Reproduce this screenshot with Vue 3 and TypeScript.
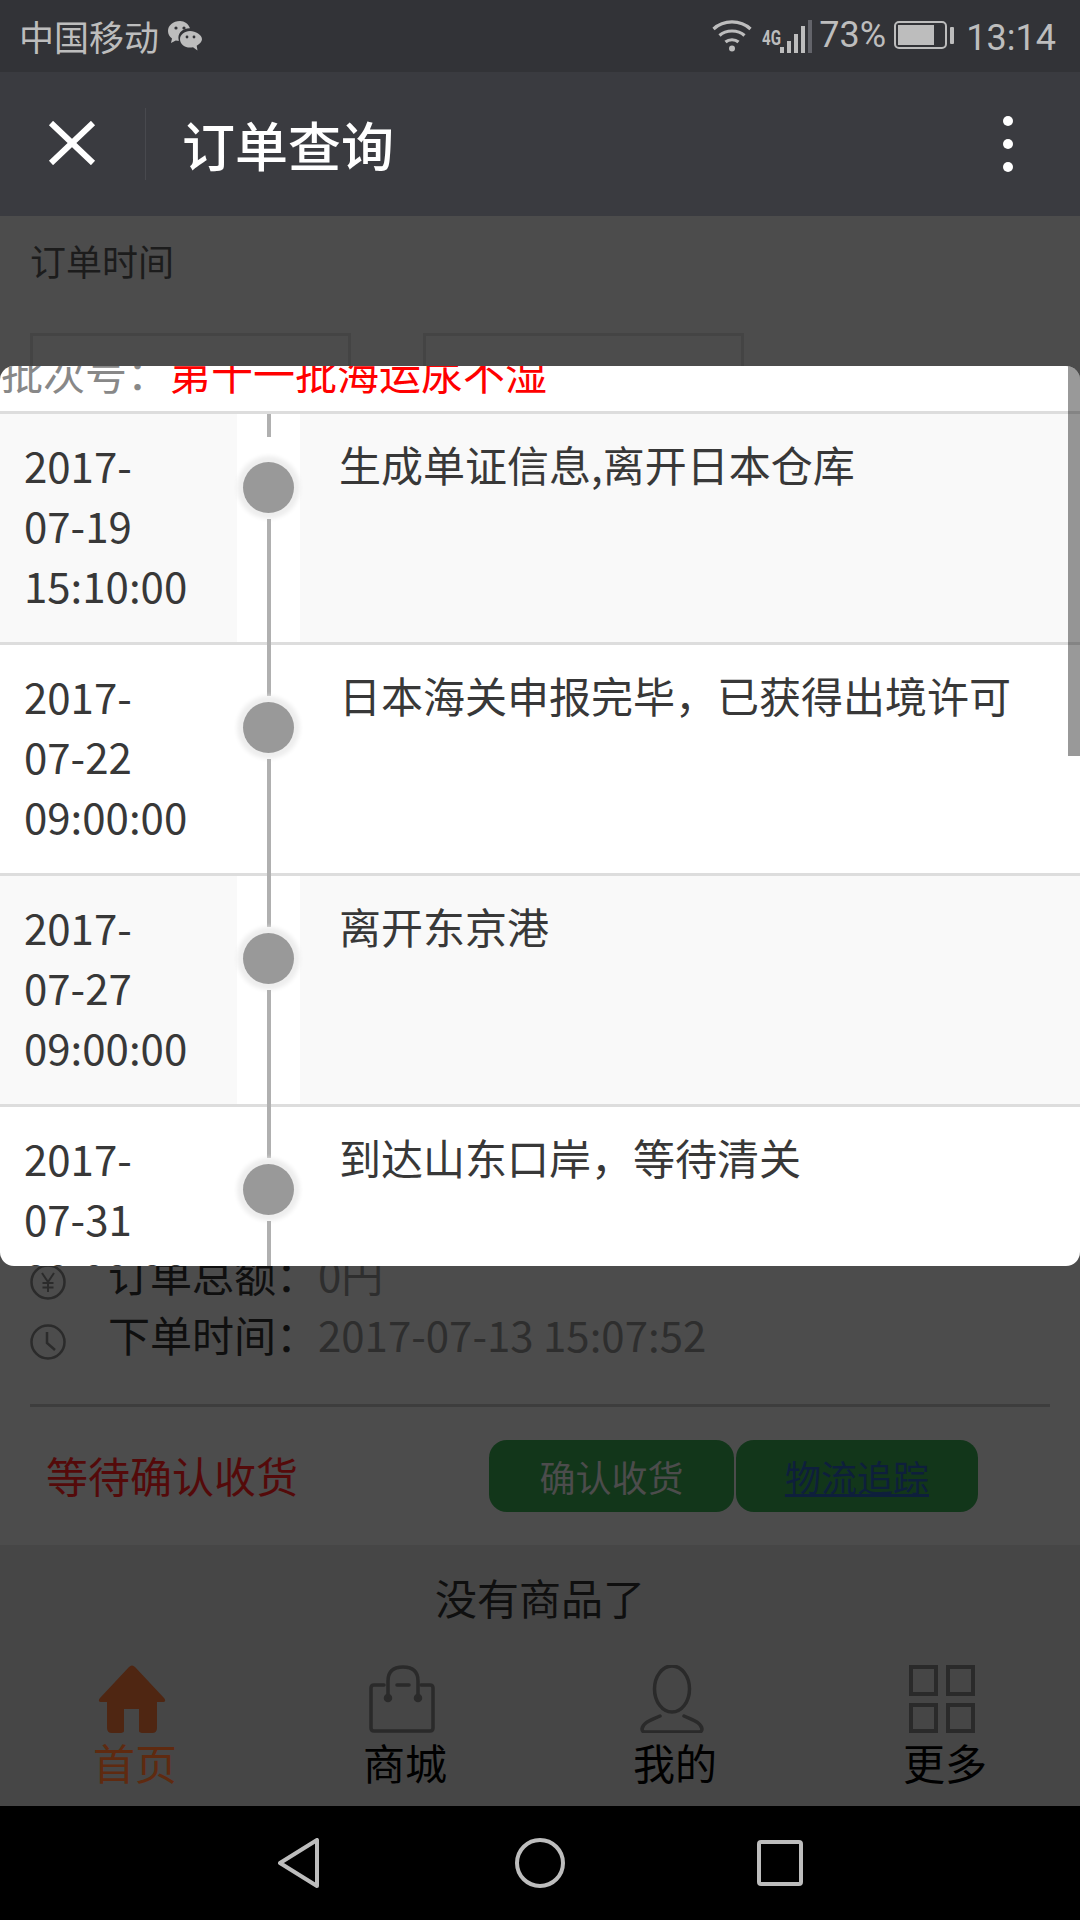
<script setup lang="ts">
interface TrackRow {
  date: string
  time: string
  text: string
}

const rows: TrackRow[] = [
  { date: '2017-07-19', time: '15:10:00', text: '生成单证信息,离开日本仓库' },
  { date: '2017-07-22', time: '09:00:00', text: '日本海关申报完毕，已获得出境许可' },
  { date: '2017-07-27', time: '09:00:00', text: '离开东京港' },
  { date: '2017-07-31', time: '09:00:00', text: '到达山东口岸，等待清关' }
]

const bars = [6, 12, 19, 27, 33]
</script>

<template>
  <div class="screen">
    <div class="status-bar">
      <div class="status-left">
        <span class="carrier">中国移动</span>
        <svg class="wechat" width="36" height="32" viewBox="0 0 36 32">
          <path d="M13 1C6 1 1 5.500 1 11c0 3 1.500 5.600 4 7.400L4 23l4.800-2.600c1 .3 2.100.4 3.200.4-.4-1-.6-2-.6-3 0-5.500 5-9.500 11-9.500h.6C21.500 4 17.600 1 13 1z" fill="#bdbdbd" />
          <path d="M23 11c-5.500 0-10 3.700-10 8.300s4.500 8.300 10 8.300c1 0 2-.1 3-.4l4.500 3.300-.8-4.800c3-1.500 5.300-3.900 5.300-6.400C35 14.700 28.500 11 23 11z" fill="#bdbdbd" />
          <circle cx="9" cy="8" r="1.600" fill="#323337" />
          <circle cx="17" cy="8" r="1.600" fill="#323337" />
          <circle cx="20" cy="17" r="1.400" fill="#323337" />
          <circle cx="27" cy="17" r="1.400" fill="#323337" />
        </svg>
      </div>
      <div class="status-right">
        <svg class="wifi" width="40" height="33" viewBox="0 0 40 33" fill="none" stroke="#bdbdbd" stroke-width="3.200">
          <path d="M1.500 10C11.500 .5 28.500 .5 38.500 10" />
          <path d="M7.500 16.500C14 10.500 26 10.500 32.500 16.500" />
          <path d="M13.500 23c3.500-3 9.500-3 13 0" />
          <circle cx="20" cy="29.500" r="3" fill="#bdbdbd" stroke="none" />
        </svg>
        <span class="net">4G</span>
        <div class="signal">
          <i v-for="(h, i) in bars" :key="i" :class="{ dim: i === 4 }" :style="{ height: h + 'px' }"></i>
        </div>
        <span class="percent">73%</span>
        <div class="battery"><div class="battery-fill"></div></div>
        <div class="battery-nub"></div>
        <span class="clock-text">13:14</span>
      </div>
    </div>

    <header class="title-bar">
      <svg class="close" width="48" height="44" viewBox="0 0 48 44">
        <path d="M3 2L45 42M45 2L3 42" stroke="#fff" stroke-width="6" />
      </svg>
      <div class="title-sep"></div>
      <h1 class="title">订单查询</h1>
      <div class="more"><i></i><i></i><i></i></div>
    </header>

    <main class="page">
      <div class="filter-label">订单时间</div>
      <div class="filter-inputs">
        <div class="fake-input"></div>
        <div class="fake-input"></div>
      </div>

      <div class="order-info">
        <div class="info-row">
          <svg class="info-icon" width="36" height="36" viewBox="0 0 36 36" fill="none" stroke="#2b2b2b" stroke-width="2.500">
            <circle cx="18" cy="18" r="16.500" />
            <path d="M12 9l6 9 6-9M18 18v10M12.500 19h11M12.500 23.500h11" stroke-width="2" />
          </svg>
          <span class="info-key">订单总额：</span>
          <span class="info-val">0円</span>
        </div>
        <div class="info-row">
          <svg class="info-icon" width="36" height="36" viewBox="0 0 36 36" fill="none" stroke="#2b2b2b" stroke-width="2.500">
            <circle cx="18" cy="18" r="16.500" />
            <path d="M17 8v11l8 7" />
          </svg>
          <span class="info-key">下单时间：</span>
          <span class="info-val">2017-07-13 15:07:52</span>
        </div>
      </div>

      <div class="order-actions">
        <span class="order-state">等待确认收货</span>
        <div class="buttons">
          <span class="btn btn-confirm">确认收货</span>
          <a class="btn btn-track" href="#">物流追踪</a>
        </div>
      </div>

      <footer class="page-foot">
        <div class="no-more">没有商品了</div>
        <nav class="tabs">
          <div class="tab tab-on">
            <svg class="tab-icon" width="68" height="68" viewBox="0 0 68 68">
              <path d="M31 2Q34-1 37 2L66 33Q69 37 64 37H59V63Q59 68 54 68H46Q41 68 41 66V44H26V66Q26 68 21 68H14Q9 68 9 63V37H4Q-1 37 2 33Z" fill="#4f2612" />
            </svg>
            <span>首页</span>
          </div>
          <div class="tab">
            <svg class="tab-icon" width="68" height="68" viewBox="0 0 68 68" fill="none" stroke="#2a2a2a" stroke-width="3.500" stroke-linecap="round">
              <path d="M16 20H6Q3 20 3 23V63Q3 66 6 66H62Q65 66 65 63V23Q65 20 62 20H53" />
              <path d="M29 20H41" />
              <path d="M20 33V16C20 6 26 2 35 2C44 2 50 6 50 16V33" />
              <circle cx="20" cy="33" r="2.500" fill="#2a2a2a" />
              <circle cx="50" cy="33" r="2.500" fill="#2a2a2a" />
            </svg>
            <span>商城</span>
          </div>
          <div class="tab">
            <svg class="tab-icon" width="68" height="68" viewBox="0 0 68 68" fill="none" stroke="#2a2a2a" stroke-width="3.500" stroke-linecap="round">
              <ellipse cx="34" cy="24" rx="17.500" ry="23" />
              <path d="M22 51C14 55 5 57 4 64Q4 67 7 67H61Q64 67 64 64C63 57 54 55 46 51" />
            </svg>
            <span>我的</span>
          </div>
          <div class="tab">
            <svg class="tab-icon" width="68" height="68" viewBox="0 0 68 68" fill="none" stroke="#2a2a2a" stroke-width="4">
              <rect x="3" y="2" width="25" height="27" />
              <rect x="40" y="2" width="25" height="27" />
              <rect x="3" y="40" width="25" height="26" />
              <rect x="40" y="40" width="25" height="26" />
            </svg>
            <span>更多</span>
          </div>
        </nav>
      </footer>

      <section class="dialog">
        <div class="dialog-scroll">
          <div class="batch">
            <span class="batch-key">批次号：</span>
            <span class="batch-val">第十一批海运尿不湿</span>
          </div>
          <div v-for="(row, i) in rows" :key="row.date" class="track-row" :class="{ striped: i % 2 === 0, first: i === 0 }">
            <div class="track-date">
              <span>{{ row.date.slice(0, 5) }}</span>
              <span>{{ row.date.slice(5) }}</span>
              <span>{{ row.time }}</span>
            </div>
            <div class="track-axis">
              <div class="stem"></div>
              <div class="dot"></div>
              <div class="stem stem-rest"></div>
            </div>
            <div class="track-text">{{ row.text }}</div>
          </div>
        </div>
        <div class="scroll-thumb"></div>
      </section>
    </main>

    <div class="nav-bar">
      <svg width="42" height="50" viewBox="0 0 42 50" fill="none" stroke="#bdbdbd" stroke-width="4" stroke-linejoin="round">
        <path d="M39 2V48L2 25Z" />
      </svg>
      <svg width="50" height="50" viewBox="0 0 50 50" fill="none" stroke="#bdbdbd" stroke-width="4">
        <circle cx="25" cy="25" r="23" />
      </svg>
      <svg width="46" height="46" viewBox="0 0 46 46" fill="none" stroke="#bdbdbd" stroke-width="4" stroke-linejoin="round">
        <rect x="2" y="2" width="42" height="42" rx="2" />
      </svg>
    </div>
  </div>
</template>

<style>
html,
body {
  margin: 0;
  background: #000;
}
</style>

<style scoped>
.screen {
  width: 1080px;
  height: 1920px;
  display: flex;
  flex-direction: column;
  overflow: hidden;
  font-family: "Noto Sans CJK SC", "Noto Sans", sans-serif;
}

.status-bar {
  height: 72px;
  background: #323337;
  color: #bdbdbd;
  display: flex;
  justify-content: space-between;
  align-items: center;
  padding: 0 24px 0 19px;
  box-sizing: border-box;
}

.status-left,
.status-right {
  display: flex;
  align-items: center;
}

.carrier {
  font-size: 35px;
  line-height: 72px;
}

.wechat {
  margin-left: 8px;
}

.status-right {
  font-family: Roboto, sans-serif;
}

.wifi {
  margin-top: -2px;
  margin-right: 1px;
}

.net {
  font-size: 21px;
  font-weight: 700;
  line-height: 20px;
  align-self: flex-start;
  margin: 14px 0 0 9px;
  width: 18px;
  transform: scaleX(0.72);
  transform-origin: left center;
}

.signal {
  display: flex;
  align-items: flex-end;
  gap: 3px;
  height: 33px;
}

.signal i {
  width: 4px;
  background: #bdbdbd;
}

.signal i.dim {
  background: #63646a;
}

.percent {
  font-size: 36px;
  margin: -3px 0 0 7px;
  width: 75px;
}

.battery {
  width: 53px;
  height: 28px;
  border: 2px solid #bdbdbd;
  border-radius: 5px;
  box-sizing: border-box;
  padding: 2px;
  margin-top: -2px;
}

.battery-fill {
  width: 36px;
  height: 100%;
  background: #bdbdbd;
}

.battery-nub {
  width: 4px;
  height: 17px;
  background: #bdbdbd;
  margin: -2px 12px 0 3px;
  border-radius: 1px;
}

.clock-text {
  font-size: 36px;
  margin-top: 3px;
}

.title-bar {
  height: 144px;
  background: #3a3b40;
  display: flex;
  align-items: center;
  padding: 0 0 0 48px;
  box-sizing: border-box;
}

.close {
  margin-top: -2px;
}

.title-sep {
  width: 1px;
  height: 72px;
  background: #48494e;
  margin: 0 36px 0 49px;
}

.title {
  margin: 0;
  font-size: 53px;
  font-weight: 500;
  color: #fff;
  line-height: 72px;
}

.more {
  margin-left: auto;
  margin-right: 67px;
  display: flex;
  flex-direction: column;
  gap: 13px;
  margin-top: -1px;
}

.more i {
  display: block;
  width: 10px;
  height: 10px;
  border-radius: 50%;
  background: #fff;
}

.page {
  position: relative;
  flex: 1;
  display: flex;
  flex-direction: column;
  background: #4c4c4c;
  min-height: 0;
}

.filter-label {
  font-size: 36px;
  line-height: 52px;
  color: #1c1c1c;
  margin: 18px 0 0 30px;
}

.filter-inputs {
  display: flex;
  gap: 72px;
  margin: 47px 0 0 30px;
  height: 70px;
}

.fake-input {
  width: 321px;
  border: 3px solid #444;
  box-sizing: border-box;
}

.order-info {
  margin: 840px 30px 0;
  padding-bottom: 41px;
  border-bottom: 3px solid #3d3d3d;
}

.info-row {
  display: flex;
  align-items: center;
  height: 60px;
  font-size: 42px;
  white-space: nowrap;
}

.info-icon {
  margin: 18px 42px 0 0;
  flex: none;
}

.info-key {
  color: #0f0f0f;
  width: 210px;
  flex: none;
}

.info-val {
  color: #2e2e2e;
}

.order-actions {
  display: flex;
  align-items: center;
  height: 72px;
  margin-top: 33px;
  padding-left: 46px;
}

.order-state {
  font-size: 42px;
  color: #540a0a;
  width: 443px;
  margin-top: -3px;
}

.buttons {
  display: flex;
  gap: 2px;
}

.btn {
  width: 245px;
  height: 72px;
  line-height: 72px;
  text-align: center;
  font-size: 36px;
  border-radius: 18px;
  background: #12361a;
  color: #4c4c4c;
}

.btn-track {
  width: 242px;
  color: #0e1f3c;
  text-decoration: underline;
}

.page-foot {
  margin-top: 33px;
  flex: 1;
  background: #464646;
}

.no-more {
  text-align: center;
  font-size: 42px;
  line-height: 60px;
  color: #0f0f0f;
  padding: 22px 0 38px;
}

.tabs {
  display: grid;
  grid-template-columns: repeat(4, 270px);
}

.tab {
  display: flex;
  flex-direction: column;
  align-items: center;
  color: #000;
  font-size: 42px;
  line-height: 42px;
}

.tab span {
  margin-top: 8px;
}

.tab-icon {
  margin-right: 7px;
  display: block;
}

.tab-on {
  color: #5f2a10;
}

.dialog {
  position: absolute;
  left: 0;
  top: 150px;
  width: 1080px;
  height: 900px;
  background: #fff;
  border-radius: 14px;
  overflow: hidden;
}

.dialog-scroll {
  margin-top: -24px;
}

.batch {
  height: 69px;
  font-size: 42px;
  line-height: 60px;
  padding-left: 1px;
  border-bottom: 3px solid #ddd;
  display: flex;
  white-space: nowrap;
}

.batch-key {
  color: #888;
  width: 168px;
  flex: none;
}

.batch-val {
  color: #f00;
}

.track-row {
  display: flex;
  height: 231px;
  border-bottom: 3px solid #ddd;
  box-sizing: border-box;
}

.track-date {
  width: 237px;
  flex: none;
  padding: 21px 0 0 24px;
  box-sizing: border-box;
  font-size: 42px;
  line-height: 60px;
  color: #383838;
}

.track-date span {
  display: block;
}

.track-axis {
  position: relative;
  width: 63px;
  flex: none;
  display: flex;
  flex-direction: column;
  align-items: center;
  background: #fff;
}

.stem {
  width: 4px;
  height: 51px;
  background: #b0b0b0;
}

.first .stem:first-child {
  height: 23px;
  margin-bottom: 19px;
}

.stem-rest {
  flex: 1;
  margin-bottom: -3px;
  height: auto;
}

.dot {
  width: 51px;
  height: 51px;
  flex: none;
  margin: 6px 0;
  border-radius: 50%;
  background: #999;
  box-shadow: 0 0 4px 6px #eee;
}

.track-text {
  flex: 1;
  padding: 20px 0 0 39px;
  font-size: 42px;
  line-height: 60px;
  color: #383838;
}

.striped .track-date,
.striped .track-text {
  background: #f9f9f9;
}

.scroll-thumb {
  position: absolute;
  right: 0;
  top: 0;
  width: 12px;
  height: 390px;
  background: rgba(0, 0, 0, 0.4);
}

.nav-bar {
  height: 114px;
  background: #000;
  display: flex;
  align-items: center;
  padding: 0 0 0 278px;
  box-sizing: border-box;
}

.nav-bar svg:nth-child(2) {
  margin-left: 195px;
}

.nav-bar svg:nth-child(3) {
  margin-left: 192px;
}
</style>
